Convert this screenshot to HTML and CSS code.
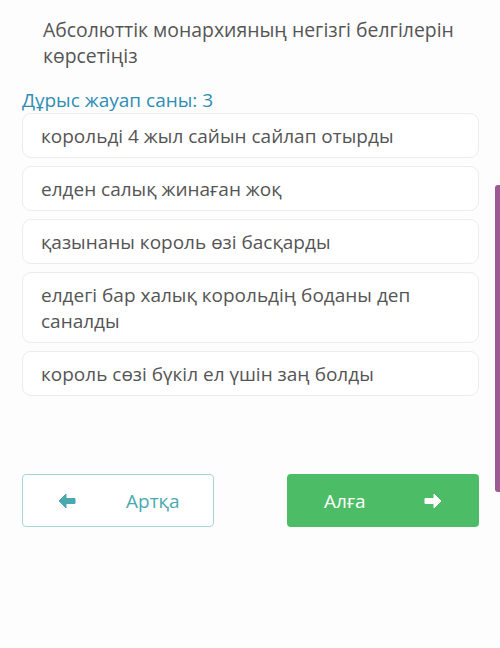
FILE: index.html
```html
<!DOCTYPE html>
<html lang="kk">
<head>
    <meta charset="UTF-8">
    <meta name="viewport" content="width=device-width, initial-scale=1.0">
    <title>Тест</title>
    <link rel="stylesheet" href="styles.css">
</head>
<body>
    <div class="page">
        <div class="question">Абсолюттік монархияның негізгі белгілерін көрсетіңіз</div>
        <div class="hint">Дұрыс жауап саны: 3</div>
        <div class="options">
            <div class="option">корольді 4 жыл сайын сайлап отырды</div>
            <div class="option">елден салық жинаған жоқ</div>
            <div class="option">қазынаны король өзі басқарды</div>
            <div class="option">елдегі бар халық корольдің боданы деп саналды</div>
            <div class="option">король сөзі бүкіл ел үшін заң болды</div>
        </div>
        <div class="nav">
            <button class="btn btn-back">
                <svg width="18" height="16" viewBox="0 0 18 16"><path d="M8 1 L1 8 L8 15 L8 10.5 L17 10.5 L17 5.5 L8 5.5 Z" fill="currentColor" stroke="currentColor" stroke-width="1" stroke-linejoin="round"/></svg>
                <span>Артқа</span>
            </button>
            <button class="btn btn-next">
                <span>Алға</span>
                <svg width="18" height="16" viewBox="0 0 18 16"><path d="M10 1 L17 8 L10 15 L10 10.5 L1 10.5 L1 5.5 L10 5.5 Z" fill="currentColor" stroke="currentColor" stroke-width="1" stroke-linejoin="round"/></svg>
            </button>
        </div>
    </div>
    <div class="side-bar"></div>
</body>
</html>
```

FILE: styles.css
```css
body {
    margin: 0;
    background-color: #fdfdfd;
    font-family: "Open Sans", Arial, sans-serif;
    color: #555;
}

.page {
    width: 457px;
    padding: 17px 0 0 22px;
}

.question {
    font-size: 19.4px;
    line-height: 26px;
    padding-left: 21px;
    padding-right: 5px;
}

.hint {
    margin-top: 20px;
    font-size: 19px;
    line-height: 22px;
    color: #2f8db3;
}

.options {
    display: flex;
    flex-direction: column;
    gap: 8px;
    margin-top: 2px;
}

.option {
    background-color: #fff;
    border: 1px solid #ececec;
    border-radius: 9px;
    padding: 8.5px 18px;
    font-size: 19px;
    line-height: 26px;
}

.nav {
    display: flex;
    justify-content: space-between;
    margin-top: 78px;
}

.btn {
    width: 192px;
    height: 53px;
    border-radius: 4px;
    font-family: "Open Sans", Arial, sans-serif;
    font-size: 19px;
    display: flex;
    align-items: center;
    cursor: pointer;
}

.btn-back {
    background-color: #fff;
    border: 1px solid #a9d3d6;
    color: #4aa9b0;
    padding: 0 0 0 35px;
    gap: 50px;
}

.btn-next {
    background-color: #4cbd66;
    border: none;
    color: #fff;
    padding: 0 0 0 37px;
    gap: 58px;
}

.side-bar {
    position: fixed;
    right: 0;
    top: 185px;
    width: 5px;
    height: 307px;
    background-color: #9b5a94;
    border-radius: 3px 0 0 3px;
}
```
